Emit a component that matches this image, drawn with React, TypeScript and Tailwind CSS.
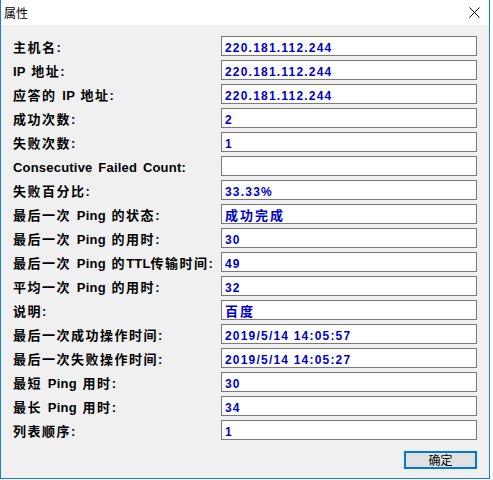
import React from "react";

const rows: [string, string][] = [
  ["主机名:", "220.181.112.244"],
  ["IP 地址:", "220.181.112.244"],
  ["应答的 IP 地址:", "220.181.112.244"],
  ["成功次数:", "2"],
  ["失败次数:", "1"],
  ["Consecutive Failed Count:", ""],
  ["失败百分比:", "33.33%"],
  ["最后一次 Ping 的状态:", "成功完成"],
  ["最后一次 Ping 的用时:", "30"],
  ["最后一次 Ping 的TTL传输时间:", "49"],
  ["平均一次 Ping 的用时:", "32"],
  ["说明:", "百度"],
  ["最后一次成功操作时间:", "2019/5/14 14:05:57"],
  ["最后一次失败操作时间:", "2019/5/14 14:05:27"],
  ["最短 Ping 用时:", "30"],
  ["最长 Ping 用时:", "34"],
  ["列表顺序:", "1"],
];

function runs(text: string) {
  return text.match(/[\u4e00-\u9fff]+|[^\u4e00-\u9fff]+/g) || [];
}

function Label({ text }: { text: string }) {
  return (
    <span className="whitespace-pre text-black">
      {runs(text).map((r, i) =>
        /[\u4e00-\u9fff]/.test(r) ? (
          <span
            key={i}
            className="font-['Noto_Sans_CJK_SC',sans-serif] text-[13px] font-bold tracking-[1.5px]"
          >
            {r}
          </span>
        ) : (
          <span
            key={i}
            className="font-['Liberation_Sans',sans-serif] text-[13px] font-bold tracking-[0.2px] [word-spacing:2px]"
          >
            {r}
          </span>
        )
      )}
    </span>
  );
}

function Value({ text }: { text: string }) {
  return (
    <span className="whitespace-pre text-[#0000cc]">
      {runs(text).map((r, i) =>
        /[\u4e00-\u9fff]/.test(r) ? (
          <span
            key={i}
            className="font-['Noto_Sans_CJK_SC',sans-serif] text-[13px] font-bold tracking-[2px]"
          >
            {r}
          </span>
        ) : (
          <span
            key={i}
            className="font-['Liberation_Sans',sans-serif] text-[12px] font-bold tracking-[1.2px]"
          >
            {r}
          </span>
        )
      )}
    </span>
  );
}

export default function App() {
  return (
    <div className="w-[493px] h-[480px] bg-white">
      <div className="w-[490px] h-[479px] border-l border-r border-b border-[#1a7fd4] bg-[#f0f0f0] flex flex-col">
        <div className="h-[25px] bg-white flex items-center justify-between pl-[3px] pr-[9px]">
          <span className="font-['Noto_Sans_CJK_SC',sans-serif] text-[12px] text-black leading-none">
            属性
          </span>
          <svg width="11" height="11" viewBox="0 0 11 11">
            <path d="M0.5 0.5 L10.5 10.5 M10.5 0.5 L0.5 10.5" stroke="#000" strokeWidth="1" fill="none" />
          </svg>
        </div>
        <div className="flex flex-col pl-[12px] pr-[12px] pt-[11px]">
          <div className="flex flex-col gap-[4px]">
            {rows.map(([l, v], i) => (
              <div key={i} className="flex items-center h-[20px]">
                <div className="w-[208px] leading-none">
                  <Label text={l} />
                </div>
                <div className="w-[256px] h-[20px] border border-[#7a7a7a] bg-white pl-[3px] flex items-center leading-none">
                  <Value text={v} />
                </div>
              </div>
            ))}
          </div>
          <div className="flex justify-end mt-[11px]">
            <button className="w-[73px] h-[18px] border-2 border-[#0078d7] bg-[#e1e1e1] flex items-center justify-center font-['Noto_Sans_CJK_SC',sans-serif] text-[12px] text-black leading-none">
              确定
            </button>
          </div>
        </div>
      </div>
    </div>
  );
}
